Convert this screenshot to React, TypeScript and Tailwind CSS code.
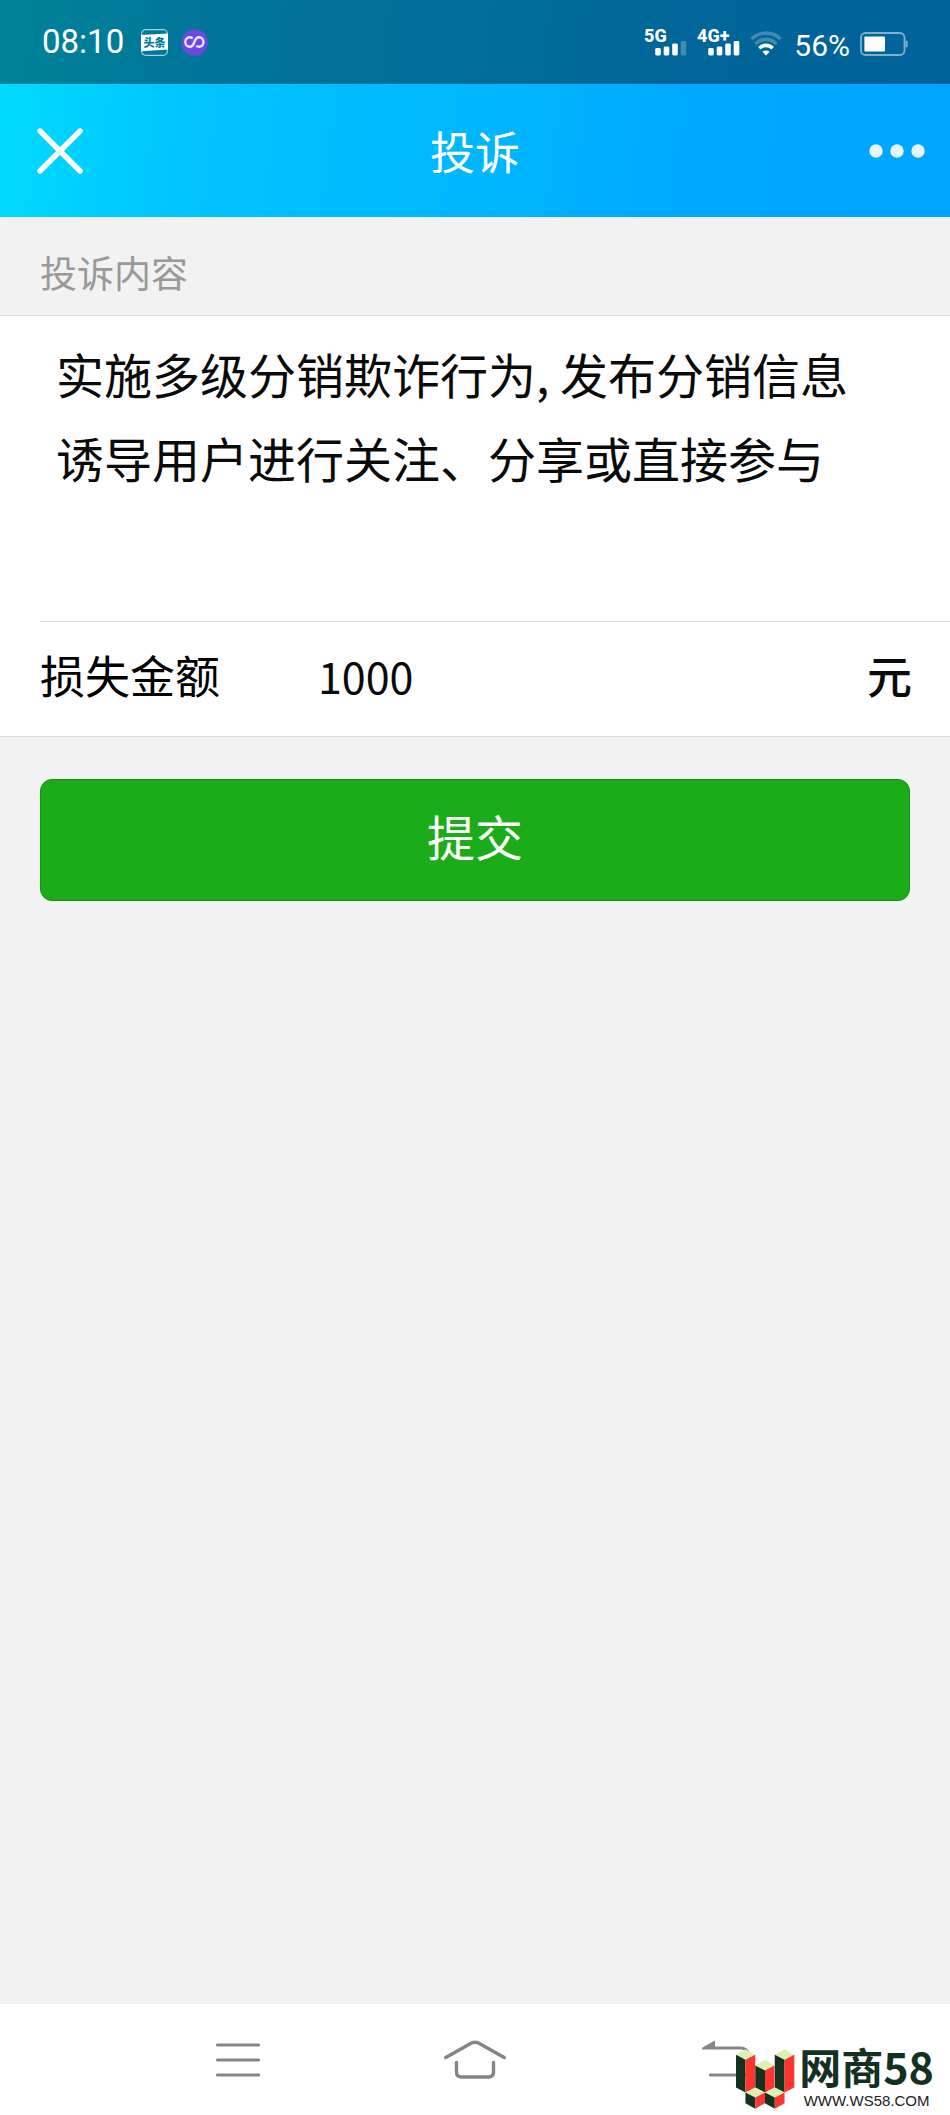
import { useState } from "react"

const DEFAULT_CONTENT =
  "实施多级分销欺诈行为, 发布分销信息诱导用户进行关注、分享或直接参与"

function AppIcons() {
  return (
    <div className="flex items-center gap-[13px]">
      <svg className="size-[27px]" viewBox="0 0 27 27" aria-label="头条">
        <rect
          x="0.7"
          y="0.7"
          width="25.6"
          height="25.6"
          rx="4"
          fill="none"
          stroke="#fff"
          strokeOpacity="0.65"
          strokeWidth="1.2"
        />
        <path d="M0 6 L27 4.4 V20.6 L0 22.2 Z" fill="#fff" />
        <text
          x="13.5"
          y="17.6"
          textAnchor="middle"
          fontSize="11"
          fontWeight="900"
          fill="#007b9b"
          className="font-['Noto_Sans_CJK_SC',sans-serif]"
        >
          头条
        </text>
      </svg>
      <svg className="size-[27px]" viewBox="0 0 27 27" aria-hidden="true">
        <circle cx="13.5" cy="13.5" r="13.3" fill="#6a49de" />
        <path
          d="M11.8 9.2 C10.8 8.6 9.8 8.3 8.8 8.3 C6.2 8.3 4.3 10.4 4.3 13 C4.3 15.7 6.2 17.8 8.8 17.8 C11.8 17.8 12.6 15.4 13.4 13 C14.2 10.6 15 8.3 18 8.3 C20.6 8.3 22.5 10.4 22.5 13 C22.5 15.7 20.6 17.8 18 17.8 C17 17.8 16 17.5 15.2 16.9"
          fill="none"
          stroke="#ebe0fb"
          strokeWidth="2.4"
        />
      </svg>
    </div>
  )
}

type SignalProps = {
  label: string
  bars: number[]
  weak?: boolean
}

function Signal({ label, bars, weak }: SignalProps) {
  return (
    <svg className="h-9 w-[43px]" viewBox="0 0 43 36" aria-label={label}>
      <text x="0" y="22" fontSize="18" fontWeight="800" fill="#fff">
        {label}
      </text>
      {bars.map((h, i) => (
        <rect
          key={i}
          x={11.2 + i * 8.5}
          y={35.5 - h}
          width="5.6"
          height={h}
          rx="1.4"
          fill="#fff"
          fillOpacity={weak && i === 3 ? 0.25 : 1}
        />
      ))}
    </svg>
  )
}

function Wifi() {
  return (
    <svg className="h-[25px] w-8" viewBox="0 0 32 25" aria-label="Wi-Fi">
      <g fill="none" stroke="#fff" strokeWidth="3.6">
        <path d="M1.5 8 C9.5 0.2 22.5 0.2 30.5 8" strokeOpacity="0.25" />
        <path d="M5.5 13 C11.5 6.8 20.5 6.8 26.5 13" strokeOpacity="0.25" />
        <path d="M9.3 17.2 C13.2 13.4 18.8 13.4 22.7 17.2" />
      </g>
      <path d="M12.4 20.8 C14.6 18.9 17.4 18.9 19.6 20.8 L16 24.6 Z" fill="#fff" />
    </svg>
  )
}

function Battery() {
  return (
    <svg className="h-6 w-12" viewBox="0 0 48 24" aria-label="56%">
      <rect
        x="1"
        y="1"
        width="43.5"
        height="22"
        rx="4.5"
        fill="none"
        stroke="#fff"
        strokeOpacity="0.5"
        strokeWidth="1.8"
      />
      <rect x="4.4" y="4.4" width="20.6" height="15" rx="0.8" fill="#fff" />
      <path d="M45.6 8.4 C47 8.4 47.6 9 47.6 10 V14 C47.6 15 47 15.6 45.6 15.6 Z" fill="#fff" fillOpacity="0.5" />
    </svg>
  )
}

function StatusBar() {
  return (
    <div className="flex h-[84px] items-end justify-between bg-black/40 px-[42px] pb-7 font-[Roboto,sans-serif] text-white">
      <div className="flex items-center gap-[17px]">
        <span className="text-[33px] leading-7">08:10</span>
        <AppIcons />
      </div>
      <div className="flex items-end">
        <Signal label="5G" bars={[7.5, 9, 12, 14.5]} weak />
        <div className="ml-2.5">
          <Signal label="4G+" bars={[7.5, 9, 12, 14.5]} />
        </div>
        <div className="ml-2.5">
          <Wifi />
        </div>
        <span className="ml-3 text-[30px] leading-5">56%</span>
        <div className="ml-2.5">
          <Battery />
        </div>
      </div>
    </div>
  )
}

function TitleBar() {
  return (
    <header className="grid h-[133px] grid-cols-[1fr_auto_1fr] items-center px-[25px] text-white">
      <button type="button" aria-label="关闭" className="justify-self-start px-3">
        <svg className="size-[46px]" viewBox="0 0 46 46">
          <path
            d="M3 3 L43 43 M43 3 L3 43"
            stroke="#fff"
            strokeWidth="5.4"
            strokeLinecap="round"
          />
        </svg>
      </button>
      <h1 className="text-[45px] leading-[60px]">投诉</h1>
      <button type="button" aria-label="更多" className="justify-self-end">
        <svg className="h-3.5 w-14" viewBox="0 0 56 14">
          <g fill="#e6f5ff">
            <circle cx="7" cy="7" r="6.7" />
            <circle cx="28" cy="7" r="6.7" />
            <circle cx="49" cy="7" r="6.7" />
          </g>
        </svg>
      </button>
    </header>
  )
}

function ComplaintForm() {
  const [content, setContent] = useState(DEFAULT_CONTENT)
  const [amount, setAmount] = useState("1000")

  return (
    <form onSubmit={(e) => e.preventDefault()}>
      <label
        htmlFor="content"
        className="block px-10 pt-7 pb-4 text-[37px] leading-[54px] text-[#999]"
      >
        投诉内容
      </label>

      <div className="border-y border-[#d9d9d9] bg-white text-[#0a0a0a]">
        <textarea
          id="content"
          value={content}
          onChange={(e) => setContent(e.target.value)}
          className="block h-[305px] w-full resize-none overflow-hidden px-14 pt-[15px] text-5xl leading-[84px] outline-none"
        />
        <div className="ml-10 flex h-[115px] items-center border-t border-[#d9d9d9] pr-[38px] pb-2 text-[45px] leading-[60px]">
          <label htmlFor="amount" className="w-[278px] shrink-0 text-black">
            损失金额
          </label>
          <input
            id="amount"
            type="text"
            inputMode="decimal"
            value={amount}
            onChange={(e) => setAmount(e.target.value)}
            className="min-w-0 flex-1 text-[43px] outline-none"
          />
          <span className="font-medium">元</span>
        </div>
      </div>

      <div className="px-10 pt-[42px]">
        <button
          type="submit"
          className="h-[122px] w-full rounded-xl border border-[#178f17] bg-[#1aad19] pb-2.5 text-5xl text-white"
        >
          提交
        </button>
      </div>
    </form>
  )
}

function Watermark() {
  return (
    <div className="pointer-events-none absolute right-4 bottom-1.5 flex items-end gap-1">
      <svg className="size-[60px]" viewBox="190 176 178 178" aria-hidden="true">
        <g fill="#dff0b4">
          <path d="M193 193 L221 177 L250 193 L221 209 Z" />
          <path d="M250 225 L279 209 L307 225 L279 241 Z" />
          <path d="M308 193 L337 177 L366 193 L337 209 Z" />
        </g>
        <g fill="#14301f">
          <path d="M193 193 L221 208 V305 L193 290 Z" />
          <path d="M250 225 L279 240 V305 L250 290 Z" />
          <path d="M308 193 L337 208 V305 L308 290 Z" />
        </g>
        <g fill="#fb352f">
          <path d="M221 208 L250 193 V290 L221 305 Z" />
          <path d="M279 240 L307 225 V290 L279 305 Z" />
          <path d="M337 208 L366 193 V290 L337 305 Z" />
        </g>
        <path d="M221 305 L250 290 L279 305 L250 320 Z M279 305 L308 290 L337 305 L308 320 Z" fill="#dff0b4" />
        <path d="M221 305 L250 320 V353 L221 337 Z M279 305 L308 320 V353 L279 337 Z" fill="#14301f" />
        <path d="M250 320 L279 305 V337 L250 353 Z M308 320 L337 305 V337 L308 353 Z" fill="#fb352f" />
      </svg>
      <div className="flex flex-col items-center text-[#14301f]">
        <div className="flex items-baseline text-[42px] leading-[54px] font-bold">
          <span>网商</span>
          <span className="text-[43px]">58</span>
        </div>
        <span className="font-['Liberation_Sans',sans-serif] text-[15px] leading-4 text-[#222]">
          WWW.WS58.COM
        </span>
      </div>
    </div>
  )
}

function NavBar() {
  return (
    <nav className="relative bg-white">
      <div className="mx-auto grid h-[111px] w-3/4 grid-cols-3 items-center justify-items-center">
        <button type="button" aria-label="任务">
          <svg className="h-10 w-[62px]" viewBox="0 0 62 40">
            <path
              d="M10.5 5 H51.5 M10.5 20 H51.5 M10.5 35 H51.5"
              stroke="#858585"
              strokeWidth="3.2"
              strokeLinecap="round"
            />
          </svg>
        </button>
        <button type="button" aria-label="主页">
          <svg className="h-10 w-[62px]" viewBox="0 0 62 40">
            <path
              d="M1.8 17.6 L27.5 3 Q31 1.4 34.5 3 L60.2 17.6 M12.5 22.5 V32 Q12.5 37 17.5 37 H44.5 Q49.5 37 49.5 32 V22.5"
              fill="none"
              stroke="#858585"
              strokeWidth="3.4"
              strokeLinecap="round"
            />
          </svg>
        </button>
        <button type="button" aria-label="返回" className="pl-8">
          <svg className="h-10 w-[56px]" viewBox="0 0 56 40">
            <path
              d="M14 8 H40 Q45 8 48 14 Q50 28 46 35 H9.5"
              fill="none"
              stroke="#858585"
              strokeWidth="3.2"
              strokeLinecap="round"
            />
            <path d="M1 9.6 Q0.6 8 2 7.2 L14 0.6 V9.6 Z" fill="#858585" />
          </svg>
        </button>
      </div>
      <Watermark />
    </nav>
  )
}

export default function App() {
  return (
    <div className="flex min-h-screen flex-col bg-[#f2f2f2] font-['Noto_Sans_CJK_SC',sans-serif]">
      <div className="bg-[linear-gradient(97deg,#00dcff_0%,#00c3ff_22%,#00b7ff_50%,#00a8ff_74%,#00a5ff_100%)]">
        <StatusBar />
        <TitleBar />
      </div>
      <main className="flex-1">
        <ComplaintForm />
      </main>
      <NavBar />
    </div>
  )
}
